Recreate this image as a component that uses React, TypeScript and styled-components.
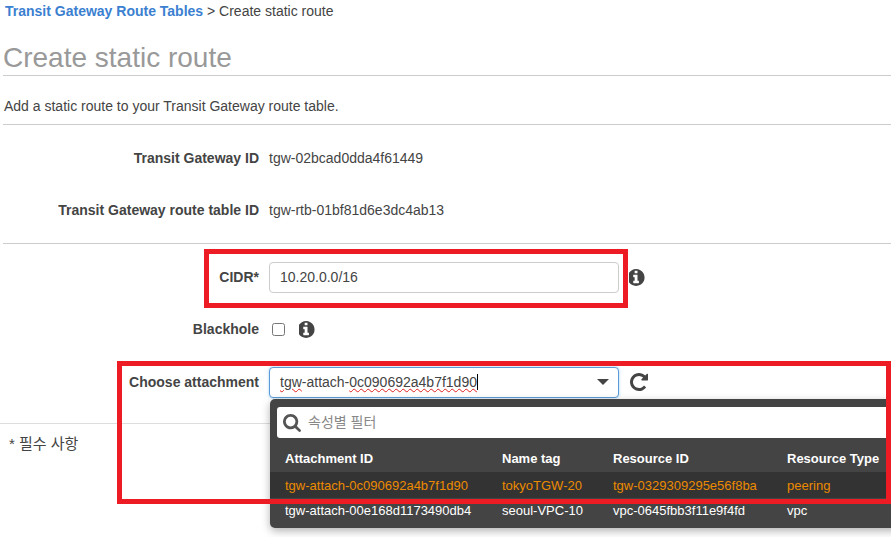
import styled, { createGlobalStyle } from 'styled-components'

const GlobalStyle = createGlobalStyle`
  html, body {
    margin: 0;
    padding: 0;
    background: #fff;
  }
  body {
    font-family: "Liberation Sans", Arial, "Noto Sans CJK KR", sans-serif;
    font-size: 14px;
    color: #444;
  }
`

const Page = styled.div`
  position: relative;
  width: 891px;
  height: 537px;
  overflow: hidden;
`

const Breadcrumb = styled.div`
  height: 22px;
  line-height: 22px;
  padding-left: 5px;
  font-size: 14px;
  color: #444;
`

const CrumbLink = styled.a`
  color: #3b7fd1;
  font-weight: 700;
`

const Title = styled.h1`
  margin: 0 0 0 3px;
  height: 53px;
  line-height: 72px;
  font-size: 28px;
  font-weight: 400;
  color: #999;
  border-bottom: 1px solid #ccc;
`

const Description = styled.p`
  margin: 0 0 0 3px;
  height: 48px;
  padding-left: 1px;
  line-height: 61px;
  font-size: 14px;
  color: #444;
  border-bottom: 1px solid #ccc;
`

const Row = styled.div<{ $height: number; $after?: number }>`
  display: grid;
  grid-template-columns: 259px auto;
  column-gap: 10px;
  align-items: center;
  justify-content: start;
  height: ${props => props.$height}px;
  margin-bottom: ${props => props.$after ?? 0}px;
`

const Label = styled.div`
  text-align: right;
  font-weight: 700;
  font-size: 14px;
  color: #444;
`

const Value = styled.div`
  display: flex;
  align-items: center;
  color: #444;
  font-size: 14px;
`

const Divider = styled.div<{ $inset?: number; $color: string }>`
  height: 1px;
  margin-left: ${props => props.$inset ?? 0}px;
  background: ${props => props.$color};
`

const Field = styled.div<{ $focused?: boolean }>`
  display: flex;
  align-items: center;
  justify-content: space-between;
  box-sizing: border-box;
  width: 350px;
  height: 31px;
  padding: 0 9px 0 10px;
  background: #fff;
  border: 1px solid ${props => (props.$focused ? '#5b9bd5' : '#ccc')};
  border-radius: 4px;
  box-shadow: ${props => (props.$focused ? '0 0 3px rgba(102, 175, 233, 0.6)' : 'none')};
  font-size: 14px;
  color: #444;
`

const Typed = styled.span`
  display: inline-block;
  border-right: 1px solid #000;
`

const Misspelled = styled.span`
  text-decoration: underline wavy #e02020 1px;
  text-underline-offset: 1px;
`

const Caret = styled.span`
  width: 0;
  height: 0;
  border-left: 6px solid transparent;
  border-right: 6px solid transparent;
  border-top: 6px solid #444;
`

const Glyph = styled.svg<{ $size: number; $gap?: number; $color?: string }>`
  flex: none;
  width: ${props => props.$size}px;
  height: ${props => props.$size}px;
  margin-left: ${props => props.$gap ?? 0}px;
  fill: ${props => props.$color ?? '#444'};
`

const Checkbox = styled.input`
  width: 13px;
  height: 13px;
  margin: 0 0 0 3px;
`

const Note = styled.div`
  padding: 12px 0 0 9px;
  font-size: 15px;
  line-height: 15px;
  color: #444;
`

const Dropdown = styled.div`
  position: absolute;
  left: 270px;
  top: 399px;
  width: 640px;
  height: 129px;
  padding-top: 8px;
  box-sizing: border-box;
  background: #444;
  border-radius: 5px;
  box-shadow: 0 3px 8px rgba(0, 0, 0, 0.3);
`

const SearchBox = styled.div`
  display: flex;
  align-items: center;
  box-sizing: border-box;
  height: 31px;
  margin-left: 7px;
  padding-left: 6px;
  background: #fff;
  border-radius: 3px;
`

const SearchText = styled.span`
  margin: 0 0 3px 7px;
  font-size: 14px;
  color: #888;
`

const TableRow = styled.div<{ $selected?: boolean; $header?: boolean; $height: number }>`
  display: grid;
  grid-template-columns: 217px 111px 174px 1fr;
  align-items: center;
  box-sizing: border-box;
  height: ${props => props.$height}px;
  padding: ${props => (props.$header ? '6px' : '0')} 0 0 15px;
  font-size: 13px;
  font-weight: ${props => (props.$header ? 700 : 400)};
  color: ${props => (props.$selected ? '#ec8a00' : '#fff')};
  background: ${props => (props.$selected ? '#333' : 'transparent')};
`

const RedBox = styled.div<{ $left: number; $top: number; $width: number; $height: number }>`
  position: absolute;
  left: ${props => props.$left}px;
  top: ${props => props.$top}px;
  width: ${props => props.$width}px;
  height: ${props => props.$height}px;
  box-sizing: border-box;
  border: 5px solid #ed1c24;
  pointer-events: none;
`

const INFO_PATH =
  'M1024 1376v-160q0-14-9-23t-23-9h-96v-512q0-14-9-23t-23-9h-320q-14 0-23 9t-9 23v160q0 14 9 23t23 9h96v320h-96q-14 0-23 9t-9 23v160q0 14 9 23t23 9h448q14 0 23-9t9-23zm-128-896v-160q0-14-9-23t-23-9h-192q-14 0-23 9t-9 23v160q0 14 9 23t23 9h192q14 0 23-9t9-23zm640 416q0 209-103 385.500t-279.500 279.500-385.500 103-385.500-103-279.500-279.500-103-385.500 103-385.500 279.500-279.500 385.500-103 385.500 103 279.500 279.500 103 385.500z'
const REPEAT_PATH =
  'M1664 256v448q0 26-19 45t-45 19h-448q-42 0-59-40-17-39 14-69l138-138q-148-137-349-137-104 0-198.500 40.500t-163.500 109.500-109.500 163.500-40.500 198.500 40.500 198.500 109.500 163.500 163.500 109.500 198.500 40.500q119 0 225-52t179-147q7-10 23-12 15 0 25 9l137 138q9 8 9.500 20.500t-7.500 22.500q-109 132-264 204.500t-327 72.500q-156 0-298-61t-245-164-164-245-61-298 61-298 164-245 245-164 298-61q147 0 284.500 55.500t244.500 156.500l130-129q29-31 70-14 39 17 39 59z'
const SEARCH_PATH =
  'M1216 832q0-185-131.500-316.500t-316.500-131.500-316.500 131.500-131.500 316.500 131.500 316.500 316.500 131.500 316.500-131.500 131.500-316.500zm512 832q0 52-38 90t-90 38q-54 0-90-38l-343-342q-179 124-399 124-143 0-273.500-55.500t-225-150-150-225-55.500-273.500 55.500-273.500 150-225 225-150 273.500-55.500 273.500 55.500 225 150 150 225 55.500 273.500q0 220-124 399l343 343q37 37 37 90z'

const columns = [
  ['tgw-attach-0c090692a4b7f1d90', 'tokyoTGW-20', 'tgw-0329309295e56f8ba', 'peering'],
  ['tgw-attach-00e168d1173490db4', 'seoul-VPC-10', 'vpc-0645fbb3f11e9f4fd', 'vpc'],
]

const InfoIcon = ({ gap }: { gap: number }) => (
  <Glyph viewBox="256 128 1280 1536" $size={17} $gap={gap}>
    <path d={INFO_PATH} />
  </Glyph>
)

export default function App() {
  return (
    <Page>
      <GlobalStyle />
      <Breadcrumb>
        <CrumbLink>Transit Gateway Route Tables</CrumbLink> &gt; Create static route
      </Breadcrumb>
      <Title>Create static route</Title>
      <Description>Add a static route to your Transit Gateway route table.</Description>
      <Row $height={66}>
        <Label>Transit Gateway ID</Label>
        <Value>tgw-02bcad0dda4f61449</Value>
      </Row>
      <Row $height={38} $after={14}>
        <Label>Transit Gateway route table ID</Label>
        <Value>tgw-rtb-01bf81d6e3dc4ab13</Value>
      </Row>
      <Divider $inset={3} $color="#ccc" />
      <Row $height={66}>
        <Label>CIDR*</Label>
        <Value>
          <Field>10.20.0.0/16</Field>
          <InfoIcon gap={10} />
        </Value>
      </Row>
      <Row $height={38}>
        <Label>Blackhole</Label>
        <Value>
          <Checkbox type="checkbox" />
          <InfoIcon gap={14} />
        </Value>
      </Row>
      <Row $height={68} $after={7}>
        <Label>Choose attachment</Label>
        <Value>
          <Field $focused>
            <Typed>
              <Misspelled>tgw</Misspelled>-attach-<Misspelled>0c090692a4b7f1d90</Misspelled>
            </Typed>
            <Caret />
          </Field>
          <Glyph viewBox="128 128 1536 1536" $size={18} $gap={11}>
            <path d={REPEAT_PATH} />
          </Glyph>
        </Value>
      </Row>
      <Divider $color="#ddd" />
      <Note>* 필수 사항</Note>
      <Dropdown>
        <SearchBox>
          <Glyph viewBox="64 128 1664 1664" $size={18} $color="#555">
            <path d={SEARCH_PATH} />
          </Glyph>
          <SearchText>속성별 필터</SearchText>
        </SearchBox>
        <TableRow $header $height={34}>
          <div>Attachment ID</div>
          <div>Name tag</div>
          <div>Resource ID</div>
          <div>Resource Type</div>
        </TableRow>
        <TableRow $selected $height={26}>
          {columns[0].map(text => <div key={text}>{text}</div>)}
        </TableRow>
        <TableRow $height={25}>
          {columns[1].map(text => <div key={text}>{text}</div>)}
        </TableRow>
      </Dropdown>
      <RedBox $left={204} $top={249} $width={424} $height={59} />
      <RedBox $left={117} $top={361} $width={774} $height={143} />
    </Page>
  )
}
